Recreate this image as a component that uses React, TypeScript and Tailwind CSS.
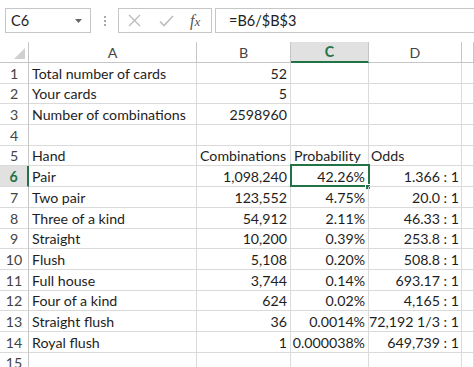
import { useState } from "react";

type Row = { label: string; b: string; c: string; d: string; head?: boolean };

const rows: Row[] = [
  { label: "Total number of cards", b: "52", c: "", d: "" },
  { label: "Your cards", b: "5", c: "", d: "" },
  { label: "Number of combinations", b: "2598960", c: "", d: "" },
  { label: "", b: "", c: "", d: "" },
  { label: "Hand", b: "Combinations", c: "Probability", d: "Odds", head: true },
  { label: "Pair", b: "1,098,240", c: "42.26%", d: "1.366 : 1" },
  { label: "Two pair", b: "123,552", c: "4.75%", d: "20.0 : 1" },
  { label: "Three of a kind", b: "54,912", c: "2.11%", d: "46.33 : 1" },
  { label: "Straight", b: "10,200", c: "0.39%", d: "253.8 : 1" },
  { label: "Flush", b: "5,108", c: "0.20%", d: "508.8 : 1" },
  { label: "Full house", b: "3,744", c: "0.14%", d: "693.17 : 1" },
  { label: "Four of a kind", b: "624", c: "0.02%", d: "4,165 : 1" },
  { label: "Straight flush", b: "36", c: "0.0014%", d: "72,192 1/3 : 1" },
  { label: "Royal flush", b: "1", c: "0.000038%", d: "649,739 : 1" },
  { label: "", b: "", c: "", d: "" },
];

const cols = ["A", "B", "C", "D", ""];

function FormulaBar() {
  return (
    <div className="flex h-[42px] items-start pt-[8px] pl-[5px] gap-0">
      <div className="flex h-[25px] w-[86px] items-center justify-between border border-[#c6c6c6] pl-[5px] pr-[8px] text-[14.5px] text-[#222]">
        <span>C6</span>
        <svg width="7" height="4" viewBox="0 0 7 4">
          <path d="M0 0h7L3.5 4z" fill="#666" />
        </svg>
      </div>
      <div className="flex h-[25px] w-[27px] flex-col items-center justify-center gap-[2px]">
        <span className="h-[2px] w-[2px] bg-[#aaa]" />
        <span className="h-[2px] w-[2px] bg-[#aaa]" />
        <span className="h-[2px] w-[2px] bg-[#aaa]" />
      </div>
      <div className="flex h-[25px] w-[94px] items-center border border-[#c6c6c6] pl-[9px]">
        <svg width="13" height="13" viewBox="0 0 13 13">
          <path d="M1 1l11 11M12 1L1 12" stroke="#bdbdbd" strokeWidth="1.4" />
        </svg>
        <svg className="ml-[18px]" width="15" height="12" viewBox="0 0 15 12">
          <path d="M1 6.5l4 4L14 1" stroke="#bdbdbd" strokeWidth="1.6" fill="none" />
        </svg>
        <span className="ml-[16px] font-['Liberation_Serif',serif] text-[16px] italic leading-none text-[#555]">
          f<span className="text-[13px]">x</span>
        </span>
      </div>
      <div className="ml-[3px] flex h-[25px] flex-1 items-center border border-r-0 border-[#c6c6c6] pl-[13px] text-[14.5px] text-[#222]">
        =B6/$B$3
      </div>
    </div>
  );
}

function Cell({
  text,
  right,
  selected,
  tight,
}: {
  text: string;
  right?: boolean;
  selected?: boolean;
  tight?: boolean;
}) {
  return (
    <div
      className={`relative flex h-[20.7px] items-center whitespace-nowrap border-b border-r border-[#dadada] pt-[1px] ${
        tight ? "px-[2px]" : "px-[3px]"
      } ${right ? "justify-end" : "justify-start"}`}
    >
      {text}
      {selected && (
        <>
          <div className="absolute -left-[1px] -top-[2px] h-[23px] w-[80px] border-2 border-[#217346]" />
          <div className="absolute -bottom-[4px] -right-[3px] h-[6px] w-[6px] border border-white bg-[#217346]" />
        </>
      )}
    </div>
  );
}

export default function App() {
  const [active] = useState({ row: 6, col: "C" });

  return (
    <div className="h-[367px] w-[474px] overflow-hidden bg-white font-['Lato',sans-serif] text-[14.2px] text-[#1e1e1e]">
      <FormulaBar />
      <div className="grid grid-cols-[29px_168px_94px_78px_93px_1fr]">
        {/* corner + column headers */}
        <div className="relative h-[21px] border-b border-r border-[#c6c6c6]">
          <svg className="absolute bottom-[3px] right-[3px]" width="11" height="11" viewBox="0 0 11 11">
            <path d="M11 0v11H0z" fill="#d0d0d0" />
          </svg>
        </div>
        {cols.map((c, i) =>
          c === active.col ? (
            <div
              key={i}
              className="flex h-[21px] items-center justify-center border-b-2 border-r border-b-[#217346] border-r-[#c6c6c6] bg-[#e1e1e1] pt-[1px] font-bold text-[#217346]"
            >
              {c}
            </div>
          ) : (
            <div
              key={i}
              className="flex h-[21px] items-center justify-center border-b border-r border-[#c6c6c6] pt-[1px] text-[#444]"
            >
              {c}
            </div>
          )
        )}

        {rows.map((r, i) => {
          const n = i + 1;
          const isActive = n === active.row;
          return [
            <div
              key={`h${n}`}
              className={`flex h-[20.7px] items-center justify-center border-b border-r pt-[1px] ${
                isActive
                  ? "border-b-[#dadada] border-r-2 border-r-[#217346] bg-[#e1e1e1] font-bold text-[#217346]"
                  : "border-b-[#dadada] border-r-[#c6c6c6] text-[#444]"
              }`}
            >
              {n}
            </div>,
            <Cell key={`a${n}`} text={r.label} />,
            <Cell key={`b${n}`} text={r.b} right={!r.head} />,
            <Cell key={`c${n}`} text={r.c} right={!r.head} selected={isActive} />,
            <Cell key={`d${n}`} text={r.d} right={!r.head} tight />,
            <Cell key={`e${n}`} text="" />,
          ];
        })}
      </div>
    </div>
  );
}
